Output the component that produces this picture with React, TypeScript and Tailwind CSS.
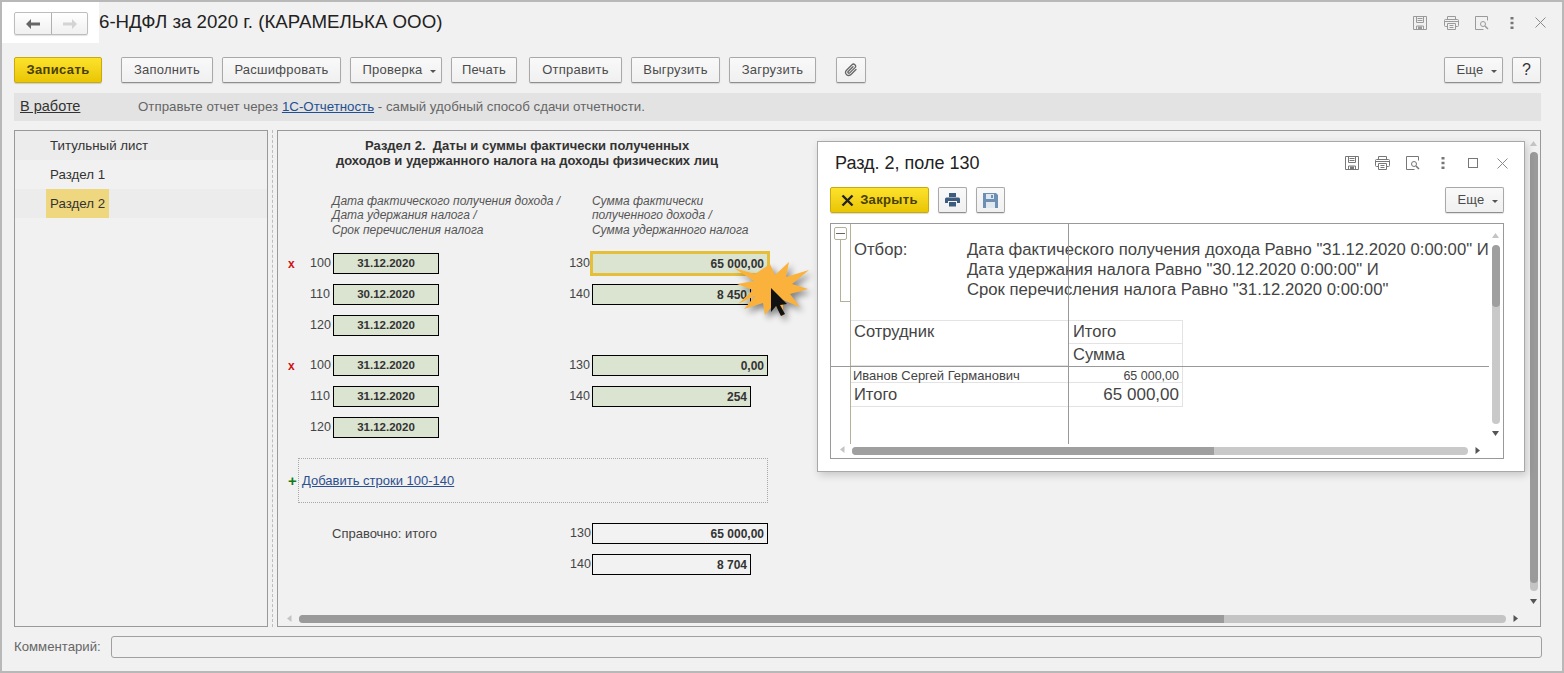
import type { ReactNode } from "react";

function SaveIcon({ color = "#9a9a9a" }: { color?: string }) {
  return (
    <svg width="16" height="16" viewBox="0 0 16 16" fill="none" stroke={color}>
      <path d="M1.5 1.5h13v13h-13z" />
      <path d="M4.5 1.5v6h7v-6M5.5 3.5h5M5.5 5.5h5" />
      <path d="M4.5 14.5v-3.5h7v3.5" />
      <rect x="6" y="11.5" width="4" height="3" fill={color} stroke="none" />
    </svg>
  );
}

function PrintIcon({ color = "#9a9a9a" }: { color?: string }) {
  return (
    <svg width="17" height="16" viewBox="0 0 17 16" fill="none" stroke={color}>
      <path d="M4.5 4.5v-3h8v3" />
      <path d="M4 11.5H2.5q-1 0-1-1v-5q0-1 1-1h12q1 0 1 1v5q0 1-1 1H13" />
      <path d="M1.5 6.5h14" />
      <path d="M4.5 8.5h8v6h-8zM6.5 10.5h4M6.5 12.5h4" />
    </svg>
  );
}

function PreviewIcon({ color = "#9a9a9a" }: { color?: string }) {
  return (
    <svg width="16" height="16" viewBox="0 0 16 16" fill="none" stroke={color}>
      <path d="M13.5 1.5h-12v13h8" />
      <path d="M13.5 1.5v4" />
      <circle cx="9" cy="9" r="2.5" />
      <path d="M11 11l3 3" strokeWidth="1.5" />
    </svg>
  );
}

function DotsIcon({ color = "#777" }: { color?: string }) {
  return (
    <svg width="4" height="12" viewBox="0 0 4 12" fill={color}>
      <rect x="0.5" y="0" width="3" height="2.5" />
      <rect x="0.5" y="4.75" width="3" height="2.5" />
      <rect x="0.5" y="9.5" width="3" height="2.5" />
    </svg>
  );
}

function CloseIcon() {
  return (
    <svg width="11" height="11" viewBox="0 0 11 11" fill="none" stroke="#8a8a8a">
      <path d="M0.5 0.5l10 10M10.5 0.5l-10 10" />
    </svg>
  );
}

function Caret() {
  return <span className="ml-[7px] mt-[2px] inline-block border-x-[3px] border-t-[3px] border-x-transparent border-t-[#555]" />;
}

function Btn({ w, children, className = "" }: { w: string; children: ReactNode; className?: string }) {
  return (
    <button className={`${w} ${className} h-[26px] shrink-0 flex items-center justify-center rounded-[2px] border border-[#a9a9a9] border-b-[#8f8f8f] bg-linear-to-b from-[#f9f9f9] to-[#f0f0f0] text-[13px] tracking-[0.25px] text-[#4b4b4b] shadow-[0_1px_1px_rgba(0,0,0,0.12)]`}>
      {children}
    </button>
  );
}

function YellowBtn({ w, children }: { w: string; children: ReactNode }) {
  return (
    <button className={`${w} h-[26px] shrink-0 flex items-center justify-center rounded-[2px] border border-[#c8aa10] bg-linear-to-b from-[#fde22a] to-[#e9c600] text-[13px] font-bold tracking-[0.35px] text-[#4a4000] shadow-[0_1px_1px_rgba(0,0,0,0.15)]`}>
      {children}
    </button>
  );
}

function Field({ w, value, center, plain, active }: { w: string; value: string; center?: boolean; plain?: boolean; active?: boolean }) {
  return (
    <div
      className={`${w} flex h-[21px] items-center border px-[3px] font-bold text-[#333] ${center ? "justify-center text-[11.5px]" : "justify-end text-[12px]"} ${plain ? "border-black bg-[#f2f2f2]" : "border-black bg-[#dbe3d1]"} ${active ? "outline-[3px] -outline-offset-1 outline-[#e6bf3a] border-transparent bg-[#cdd5c3]" : ""}`}
    >
      {value}
    </div>
  );
}

function FormRow({ mark, code, date, code2, sum, sumWide, active }: { mark?: boolean; code: string; date: string; code2?: string; sum?: string; sumWide?: boolean; active?: boolean }) {
  return (
    <div className="flex h-[21px] items-center text-[12.5px] text-[#444]">
      <span className="ml-[10px] w-[22px] text-[12px] font-bold text-[#d01010]">{mark ? "x" : ""}</span>
      <span className="w-[20px] text-right">{code}</span>
      <div className="ml-[3px]">
        <Field w="w-[106px]" value={date} center />
      </div>
      {code2 && <span className="w-[151px] text-right">{code2}</span>}
      {sum && (
        <div className="ml-[2px]">
          <Field w={sumWide ? "w-[176px]" : "w-[159px]"} value={sum} active={active} />
        </div>
      )}
    </div>
  );
}

function TotalRow({ label, code, sum, w }: { label?: string; code: string; sum: string; w: string }) {
  return (
    <div className="flex h-[21px] items-center text-[#444]">
      <span className="ml-[54px] w-[238px] text-[13px]">{label}</span>
      <span className="w-[20px] text-right text-[12.5px]">{code}</span>
      <div className="ml-[2px]">
        <Field w={w} value={sum} plain />
      </div>
    </div>
  );
}

function Arrow({ dir, className }: { dir: "up" | "down" | "left" | "right"; className: string }) {
  const d = { up: "M3.5 1L7 6H0z", down: "M0 1h7L3.5 6z", left: "M5.5 0v7L1 3.5z", right: "M1.5 0L6 3.5 1.5 7z" }[dir];
  return (
    <svg width="7" height="7" viewBox="0 0 7 7" className={`absolute ${className}`}>
      <path d={d} fill={dir === "down" || dir === "right" ? "#555" : "#c4c4c4"} />
    </svg>
  );
}

export default function App() {
  return (
    <div className="relative flex h-[673px] w-[1564px] flex-col overflow-hidden border-2 border-[#b8b8b8] bg-[#f1f1f1] font-['Liberation_Sans',Arial,sans-serif]">
      {/* Header */}
      <div className="flex h-[41px] shrink-0">
        <div className="h-[41px] w-[97px] bg-white pl-[12px] pt-[10px]">
          <div className="flex h-[23px] w-[74px] rounded-[2px] border border-[#bdbdbd] bg-linear-to-b from-white to-[#f0f0f0] shadow-[0_1px_1px_rgba(0,0,0,0.12)]">
            <div className="flex w-[37px] items-center justify-center border-r border-[#b0b0b0]">
              <svg width="14" height="10" viewBox="0 0 14 10" fill="#666">
                <path d="M0 5l5-5v3.5h9v3H5V10z" />
              </svg>
            </div>
            <div className="flex flex-1 items-center justify-center">
              <svg width="14" height="10" viewBox="0 0 14 10" fill="#d4d4d4">
                <path d="M14 5L9 0v3.5H0v3h9V10z" />
              </svg>
            </div>
          </div>
        </div>
        <div className="flex flex-1 items-center">
          <h1 className="text-[18.7px] leading-none text-[#222]">6-НДФЛ за 2020 г. (КАРАМЕЛЬКА ООО)</h1>
          <div className="ml-auto flex items-center pr-[7px]">
            <div className="flex w-[30px] justify-center"><SaveIcon /></div>
            <div className="flex w-[32px] justify-center"><PrintIcon /></div>
            <div className="flex w-[30px] justify-center"><PreviewIcon /></div>
            <div className="flex w-[29px] justify-center"><DotsIcon /></div>
            <div className="flex w-[29px] justify-center"><CloseIcon /></div>
          </div>
        </div>
      </div>

      {/* Toolbar */}
      <div className="mt-[14px] flex h-[26px] shrink-0 pl-[12px] pr-[21px]">
        <YellowBtn w="w-[88px]">Записать</YellowBtn>
        <Btn w="w-[92px]" className="ml-[19px]">Заполнить</Btn>
        <Btn w="w-[119px]" className="ml-[9px]">Расшифровать</Btn>
        <Btn w="w-[92px]" className="ml-[9px] pl-[6px]">Проверка<Caret /></Btn>
        <Btn w="w-[66px]" className="ml-[9px]">Печать</Btn>
        <Btn w="w-[93px]" className="ml-[12px]">Отправить</Btn>
        <Btn w="w-[89px]" className="ml-[9px]">Выгрузить</Btn>
        <Btn w="w-[87px]" className="ml-[9px]">Загрузить</Btn>
        <Btn w="w-[30px]" className="ml-[20px]">
          <svg width="14" height="14" viewBox="0 0 14 14" fill="none" stroke="#666" strokeWidth="1.3" strokeLinecap="round">
            <path d="M12 6.5L7 11.5a3 3 0 0 1-4.5-4.2L8 1.8a2 2 0 0 1 3 2.8L5.7 9.9a1 1 0 0 1-1.5-1.4L9 3.7" />
          </svg>
        </Btn>
        <Btn w="w-[59px]" className="ml-auto pl-[6px]">Еще<Caret /></Btn>
        <Btn w="w-[29px]" className="ml-[9px]"><span className="text-[16px] text-[#333]">?</span></Btn>
      </div>

      {/* Status bar */}
      <div className="mx-[12px] mt-[10px] flex h-[28px] w-[1527px] shrink-0 items-center bg-[#e3e3e3] pl-[6px]">
        <span className="w-[118px] text-[14.5px] text-[#333] underline">В работе</span>
        <span className="text-[13.3px] text-[#666]">
          Отправьте отчет через <span className="text-[#1f4f91] underline">1С-Отчетность</span> - самый удобный способ сдачи отчетности.
        </span>
      </div>

      {/* Panels */}
      <div className="ml-[12px] mt-[9px] flex h-[497px] w-[1527px] shrink-0">
        <div className="w-[254px] shrink-0 border border-[#999] text-[13.3px] text-[#333]">
          <div className="flex h-[29px] items-center bg-[#ececec] pl-[35px]">Титульный лист</div>
          <div className="flex h-[29px] items-center pl-[35px]">Раздел 1</div>
          <div className="flex h-[29px] items-center bg-[#ececec] pl-[31px]">
            <span className="flex h-[29px] w-[63px] items-center bg-[#efd77f] pl-[4px]">Раздел 2</span>
          </div>
        </div>
        <div className="flex w-[9px] shrink-0 justify-center">
          <div className="h-full border-l border-dashed border-[#bdbdbd]" />
        </div>

        <div className="relative flex-1 overflow-hidden border border-[#999]">
          <div className="pt-[7px] text-[13px] font-bold leading-[15px] text-[#333]">
            <div className="pl-[87px]">Раздел 2.&nbsp; Даты и суммы фактически полученных</div>
            <div className="pl-[58px]">доходов и удержанного налога на доходы физических лиц</div>
          </div>

          <div className="mt-[25.5px] flex pl-[54px] text-[12px] italic leading-[14.5px] text-[#555]">
            <div className="w-[260px]">
              Дата фактического получения дохода /<br />
              Дата удержания налога /<br />
              Срок перечисления налога
            </div>
            <div>
              Сумма фактически<br />
              полученного дохода /<br />
              Сумма удержанного налога
            </div>
          </div>

          <div className="mt-[16px] flex flex-col gap-[10px]">
            <FormRow mark code="100" date="31.12.2020" code2="130" sum="65 000,00" sumWide active />
            <FormRow code="110" date="30.12.2020" code2="140" sum="8 450" />
            <FormRow code="120" date="31.12.2020" />
          </div>
          <div className="mt-[19px] flex flex-col gap-[10px]">
            <FormRow mark code="100" date="31.12.2020" code2="130" sum="0,00" sumWide />
            <FormRow code="110" date="31.12.2020" code2="140" sum="254" />
            <FormRow code="120" date="31.12.2020" />
          </div>

          <div className="mt-[20px] flex items-center pl-[10px]">
            <span className="w-[10px] text-[15px] font-bold leading-none text-[#157a15]">+</span>
            <div className="flex h-[45px] w-[470px] items-center border border-dotted border-[#a8a8a8] pl-[3px] text-[13px] text-[#2d4f8e] underline">
              Добавить строки 100-140
            </div>
          </div>

          <div className="mt-[20px] flex flex-col gap-[10px]">
            <TotalRow label="Справочно: итого" code="130" sum="65 000,00" w="w-[176px]" />
            <TotalRow code="140" sum="8 704" w="w-[159px]" />
          </div>

          {/* Scrollbars */}
          <Arrow dir="left" className="left-[8px] top-[484px]" />
          <div className="absolute left-[21px] top-[484px] flex h-[8px] w-[1207px] overflow-hidden rounded-full bg-[#c4c4c4]">
            <div className="h-full w-[925px] bg-[#9a9a9a]" />
          </div>
          <Arrow dir="right" className="left-[1234px] top-[484px]" />
          <Arrow dir="up" className="left-[1252px] top-[9px]" />
          <div className="absolute left-[1252px] top-[21px] h-[439px] w-[8px] overflow-hidden rounded-full bg-[#c4c4c4]">
            <div className="h-[431px] w-full rounded-full bg-[#9a9a9a]" />
          </div>
          <Arrow dir="down" className="left-[1252px] top-[467px]" />
        </div>
      </div>

      {/* Comment */}
      <div className="mt-[9px] flex h-[22px] shrink-0 items-center pl-[12px]">
        <span className="w-[97px] text-[13.2px] text-[#666]">Комментарий:</span>
        <div className="h-[22px] w-[1431px] rounded-[3px] border border-[#a0a0a0]" />
      </div>

      {/* Report window */}
      <div className="absolute left-[815px] top-[139px] flex h-[331px] w-[708px] flex-col border border-[#a8a8a8] bg-white shadow-[2px_3px_8px_rgba(0,0,0,0.18)]">
        <div className="mt-[10px] flex h-[22px] items-center pl-[17px] pr-[7px]">
          <span className="text-[18px] leading-none text-[#222]">Разд. 2, поле 130</span>
          <div className="ml-auto flex items-center">
            <div className="flex w-[31px] justify-center"><SaveIcon color="#777" /></div>
            <div className="flex w-[31px] justify-center"><PrintIcon color="#777" /></div>
            <div className="flex w-[30px] justify-center"><PreviewIcon color="#777" /></div>
            <div className="flex w-[30px] justify-center"><DotsIcon /></div>
            <div className="flex w-[29px] justify-center">
              <div className="h-[10px] w-[10px] border border-[#777]" />
            </div>
            <div className="flex w-[30px] justify-center"><CloseIcon /></div>
          </div>
        </div>

        <div className="mt-[13px] flex h-[26px] pl-[12px] pr-[20px]">
          <YellowBtn w="w-[99px]">
            <svg width="13" height="13" viewBox="0 0 13 13" stroke="#222" strokeWidth="2.4" className="mr-[6px]">
              <path d="M1.5 1.5l10 10M11.5 1.5l-10 10" />
            </svg>
            Закрыть
          </YellowBtn>
          <Btn w="w-[29px]" className="ml-[9px]">
            <svg width="15" height="14" viewBox="0 0 15 14" fill="#3e5c7e">
              <path d="M4 0h7v4H4z" />
              <path d="M1.5 4.5h12q1.5 0 1.5 1.5v4h-3V8H3v2H0V6q0-1.5 1.5-1.5z" />
              <path d="M4 9h7v4.5H4z" />
            </svg>
          </Btn>
          <Btn w="w-[29px]" className="ml-[9px]">
            <svg width="15" height="15" viewBox="0 0 15 15">
              <path d="M0 0h13l2 2v13H0z" fill="#6c8fb3" />
              <path d="M3 1h8v5H3z" fill="#dfe7ef" />
              <path d="M3 9h9v6H3z" fill="#dfe7ef" />
              <path d="M8 2h2v3H8z" fill="#6c8fb3" />
            </svg>
          </Btn>
          <Btn w="w-[59px]" className="ml-auto pl-[6px]">Еще<Caret /></Btn>
        </div>

        <div className="relative mx-[12px] mt-[10px] h-[236px] w-[674px] overflow-hidden border border-[#999] text-[#444]">
          {/* group outline and grid lines */}
          <div className="absolute left-[3px] top-[3px] flex h-[13px] w-[13px] items-center justify-center rounded-[2px] border border-[#b5b09a] bg-white">
            <div className="h-px w-[9px] bg-[#666]" />
          </div>
          <div className="absolute left-[9px] top-[16px] h-[62px] w-[10px] border-b border-l border-[#b5b09a]" />
          <div className="absolute left-[19px] top-0 h-[220px] w-px bg-[#b5b09a]" />
          <div className="absolute left-[237px] top-0 h-[220px] w-px bg-[#999]" />
          <div className="absolute left-0 top-[142px] h-px w-[658px] bg-[#999]" />

          <div className="flex pl-[23px] pt-[16px] text-[16.7px] leading-[20px]">
            <span className="w-[113px]">Отбор:</span>
            <div className="w-[530px] whitespace-nowrap">
              Дата фактического получения дохода Равно "31.12.2020 0:00:00" И<br />
              Дата удержания налога Равно "30.12.2020 0:00:00" И<br />
              Срок перечисления налога Равно "31.12.2020 0:00:00"
            </div>
          </div>

          <div className="ml-[19px] mt-[20px] grid w-[333px] grid-cols-[218px_115px] grid-rows-[23px_23px_17px_24px] text-[16.5px] leading-[20px]">
            <div className="row-span-2 border-y border-[#e3e3e3] pl-[4px]">Сотрудник</div>
            <div className="border-r border-t border-[#e3e3e3] pl-[5px]">Итого</div>
            <div className="border-r border-t border-[#e3e3e3] pl-[5px]">Сумма</div>
            <div className="border-b border-[#e3e3e3] pl-[3px] text-[13px] leading-[20px]">Иванов Сергей Германович</div>
            <div className="border-b border-r border-[#e3e3e3] pr-[3px] text-right text-[12.5px] leading-[20px]">65 000,00</div>
            <div className="border-b border-[#e3e3e3] pl-[4px] leading-[22px]">Итого</div>
            <div className="border-b border-r border-[#e3e3e3] pr-[3px] text-right text-[17px] leading-[24px]">65 000,00</div>
          </div>

          <Arrow dir="up" className="left-[661px] top-[8px]" />
          <div className="absolute left-[661px] top-[21px] h-[179px] w-[8px] overflow-hidden rounded-full bg-[#c9c9c9]">
            <div className="h-[62px] w-full rounded-full bg-[#9f9f9f]" />
          </div>
          <Arrow dir="down" className="left-[661px] top-[206px]" />
          <Arrow dir="left" className="left-[8px] top-[222px]" />
          <div className="absolute left-[21px] top-[223px] flex h-[8px] w-[616px] overflow-hidden rounded-full bg-[#c9c9c9]">
            <div className="h-full w-[362px] bg-[#9f9f9f]" />
          </div>
          <Arrow dir="right" className="left-[643px] top-[223px]" />
        </div>
      </div>

      {/* Click marker */}
      <svg width="110" height="90" viewBox="0 0 110 90" className="absolute left-[718px] top-[238px] drop-shadow-[3px_4px_3px_rgba(0,0,0,0.45)]">
        <path
          d="M14 28L35 34 50 24 55 35 69 22 66 37 89 30 72 44 88 49 70 54 80 67 63 60 63 77 54 64 45 75 43 63 24 69 35 56 18 64 33 50 17 44 34 41z"
          fill="#fbb23c"
        />
        <path d="M51 48V72L56 66 61 76 65 74 60 65 67 64z" fill="#111" />
      </svg>
    </div>
  );
}
